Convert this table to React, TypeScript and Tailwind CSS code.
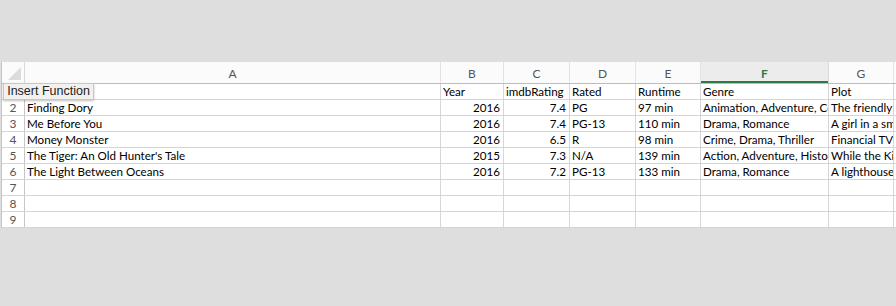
const cols = [
  { key: "A", w: "w-[416px]" },
  { key: "B", w: "w-[63px]" },
  { key: "C", w: "w-[66px]" },
  { key: "D", w: "w-[66px]" },
  { key: "E", w: "w-[65px]" },
  { key: "F", w: "w-[128px]" },
  { key: "G", w: "w-[65px]" },
  { key: "H", w: "w-[60px]" },
]

type Cell = { v: string; right?: boolean }

const rows: Cell[][] = [
  [{ v: "Title" }, { v: "Year" }, { v: "imdbRating" }, { v: "Rated" }, { v: "Runtime" }, { v: "Genre" }, { v: "Plot" }, { v: "" }],
  [
    { v: "Finding Dory" }, { v: "2016", right: true }, { v: "7.4", right: true }, { v: "PG" }, { v: "97 min" },
    { v: "Animation, Adventure, Comedy" }, { v: "The friendly but forgetful blue tang fish" }, { v: "" },
  ],
  [
    { v: "Me Before You" }, { v: "2016", right: true }, { v: "7.4", right: true }, { v: "PG-13" }, { v: "110 min" },
    { v: "Drama, Romance" }, { v: "A girl in a small town forms an unlikely bond" }, { v: "" },
  ],
  [
    { v: "Money Monster" }, { v: "2016", right: true }, { v: "6.5", right: true }, { v: "R" }, { v: "98 min" },
    { v: "Crime, Drama, Thriller" }, { v: "Financial TV host Lee Gates" }, { v: "" },
  ],
  [
    { v: "The Tiger: An Old Hunter's Tale" }, { v: "2015", right: true }, { v: "7.3", right: true }, { v: "N/A" }, { v: "139 min" },
    { v: "Action, Adventure, History" }, { v: "While the King's army hunts" }, { v: "" },
  ],
  [
    { v: "The Light Between Oceans" }, { v: "2016", right: true }, { v: "7.2", right: true }, { v: "PG-13" }, { v: "133 min" },
    { v: "Drama, Romance" }, { v: "A lighthouse keeper and his wife" }, { v: "" },
  ],
  [], [], [],
]

export default function App() {
  return (
    <div className="relative h-[306px] w-[896px] overflow-hidden bg-[#dedede] pt-[62px] font-['Lato',sans-serif] text-[11.6px] text-black">
      <div className="ml-[1px] w-[960px] border-l border-[#c6c6c6] bg-white">
        {/* column letters */}
        <div className="flex h-[22px] border-b border-[#bdbdbd] bg-[#fbfbfb] text-[12px]">
          <div className="relative w-[23px] shrink-0 border-r border-[#dadada]">
            <svg className="absolute bottom-[3px] right-[3px]" width="13" height="13" viewBox="0 0 13 13">
              <path d="M13 0 L13 13 L0 13 Z" fill="#dcdcdc" />
            </svg>
          </div>
          {cols.map((c) => (
            <div
              key={c.key}
              className={
                c.key === "F"
                  ? `${c.w} shrink-0 border-r border-[#dadada] bg-[#ececec] pt-[3px] text-center font-bold text-[#2f7a45] shadow-[inset_0_-2px_0_#2e7a47]`
                  : `${c.w} shrink-0 border-r border-[#e3e3e3] pt-[3px] text-center text-[#555]`
              }
            >
              {c.key}
            </div>
          ))}
        </div>
        {rows.map((r, i) => (
          <div key={i} className="flex h-[16px] border-b border-[#d6d6d6] leading-[15px]">
            <div className="w-[23px] shrink-0 border-r border-[#c6c6c6] text-center text-[12px] text-[#555]">{i + 1}</div>
            {cols.map((c, j) => {
              const cell = r[j]
              return (
                <div
                  key={c.key}
                  className={`${c.w} shrink-0 overflow-hidden whitespace-nowrap border-r border-[#d6d6d6] ${
                    cell?.right ? "pr-[3px] text-right" : "pl-[2px]"
                  }`}
                >
                  {cell?.v}
                </div>
              )
            })}
          </div>
        ))}
      </div>

      <div className="absolute left-[3px] top-[83px] flex h-[17px] w-[91px] items-center justify-center border border-[#c9c7c4] bg-[#f3f1ee] font-['Liberation_Sans',sans-serif] text-[12.5px] text-[#222] shadow-[0_1px_2px_rgba(0,0,0,0.25)]">
        Insert Function
      </div>
    </div>
  )
}
